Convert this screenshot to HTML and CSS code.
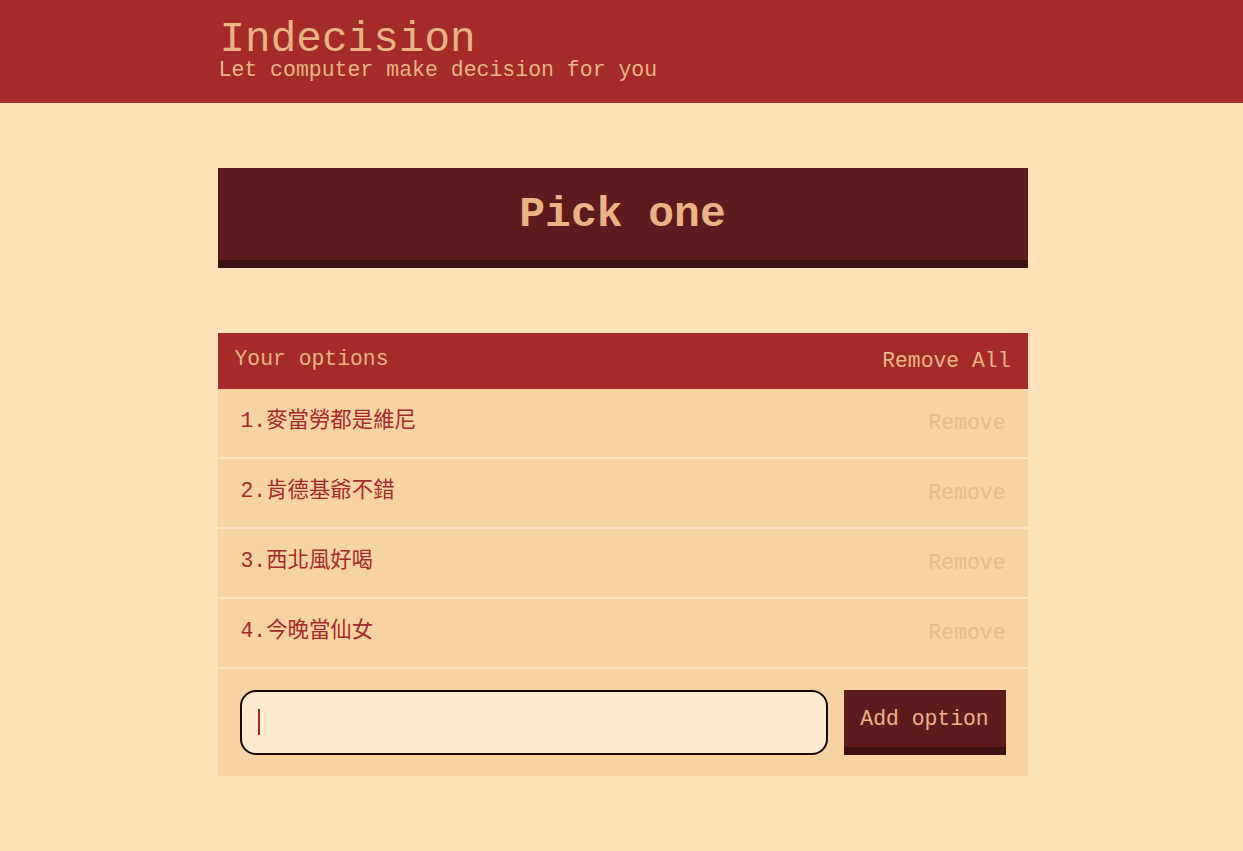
FILE: index.html
```html
<!DOCTYPE html>
<html lang="zh-Hant">
<head>
<meta charset="utf-8">
<title>Indecision</title>
<link rel="stylesheet" href="styles.css">
</head>
<body>
<header class="header">
  <div class="container">
    <h1 class="header__title">Indecision</h1>
    <h2 class="header__subtitle">Let computer make decision for you</h2>
  </div>
</header>
<main class="container main">
  <button class="big-button">Pick one</button>
  <section class="widget">
    <div class="widget-header">
      <h3 class="widget-header__title">Your options</h3>
      <button class="button-link">Remove All</button>
    </div>
    <div class="option">
      <p class="option__text">1.麥當勞都是維尼</p>
      <button class="button-link button-link--faded">Remove</button>
    </div>
    <div class="option">
      <p class="option__text">2.肯德基爺不錯</p>
      <button class="button-link button-link--faded">Remove</button>
    </div>
    <div class="option">
      <p class="option__text">3.西北風好喝</p>
      <button class="button-link button-link--faded">Remove</button>
    </div>
    <div class="option">
      <p class="option__text">4.今晚當仙女</p>
      <button class="button-link button-link--faded">Remove</button>
    </div>
    <form class="add-option" onsubmit="return false">
      <div class="add-option__field">
        <input class="add-option__input" type="text" name="option" autofocus>
        <span class="add-option__caret"></span>
      </div>
      <button class="button">Add option</button>
    </form>
  </section>
</main>
</body>
</html>
```
FILE: styles.css
```css
* { box-sizing: border-box; }
html, body { margin: 0; padding: 0; }
body {
  background: #ffe1b8;
  font-family: "Courier New", "Liberation Mono", "Noto Sans CJK TC", monospace;
  color: #a52a2a;
}
.container {
  width: 810px;
  margin: 0 auto;
  position: relative;
  left: 1px;
}
.header {
  background: #a52a2a;
  height: 103px;
  padding-top: 20px;
}
.header__title {
  margin: 0 0 0 2px;
  font-size: 42.7px;
  font-weight: normal;
  line-height: 39px;
  color: #e9b385;
}
.header__subtitle {
  margin: 0;
  font-size: 21.5px;
  font-weight: normal;
  line-height: 22px;
  color: #e9b385;
  margin-left: 1px;
}
.main {
  padding-top: 65px;
}
.big-button {
  display: block;
  width: 100%;
  height: 100px;
  margin: 0 0 65px;
  padding: 0;
  border: none;
  border-bottom: 8px solid #3e1012;
  background: #5e1b1e;
  color: #e9b385;
  font-family: inherit;
  font-weight: bold;
  font-size: 43px;
}
.widget {
  background: #f7d3a1;
}
.widget-header {
  background: #a52a2a;
  height: 56px;
  display: flex;
  justify-content: space-between;
  align-items: center;
  padding: 0 17px;
}
.widget-header__title {
  margin: 0 0 4px;
  font-size: 21.4px;
  font-weight: normal;
  color: #e9b385;
}
.button-link {
  background: none;
  border: none;
  padding: 0;
  font-family: inherit;
  font-size: 21.4px;
  color: #e9b385;
}
.button-link--faded {
  color: #e6bb8e;
}
.option {
  height: 70px;
  display: flex;
  justify-content: space-between;
  align-items: center;
  padding: 0 22px 0 23px;
  border-bottom: 2px solid #fce2c0;
}
.option__text {
  margin: 0 0 12px;
  font-size: 21.4px;
  color: #a52a2a;
}
.add-option {
  display: flex;
  gap: 16px;
  padding: 21px 22px 21px 22px;
}
.add-option__field {
  flex: 1;
  position: relative;
  display: flex;
}
.add-option__input {
  flex: 1;
  height: 65px;
  border: 2px solid #1a0a08;
  border-radius: 16px;
  background: #fdeacf;
  padding: 0 17px;
  font-family: inherit;
  font-size: 21.4px;
  color: #a52a2a;
  caret-color: #a52a2a;
  outline: none;
}
.add-option__caret {
  position: absolute;
  left: 18px;
  top: 19px;
  width: 2px;
  height: 26px;
  background: #a52a2a;
  pointer-events: none;
}
.button {
  width: 162px;
  height: 65px;
  border: none;
  border-bottom: 8px solid #3e1012;
  background: #5e1b1e;
  color: #e9b385;
  font-family: inherit;
  font-size: 21.4px;
  padding: 0;
}
```
